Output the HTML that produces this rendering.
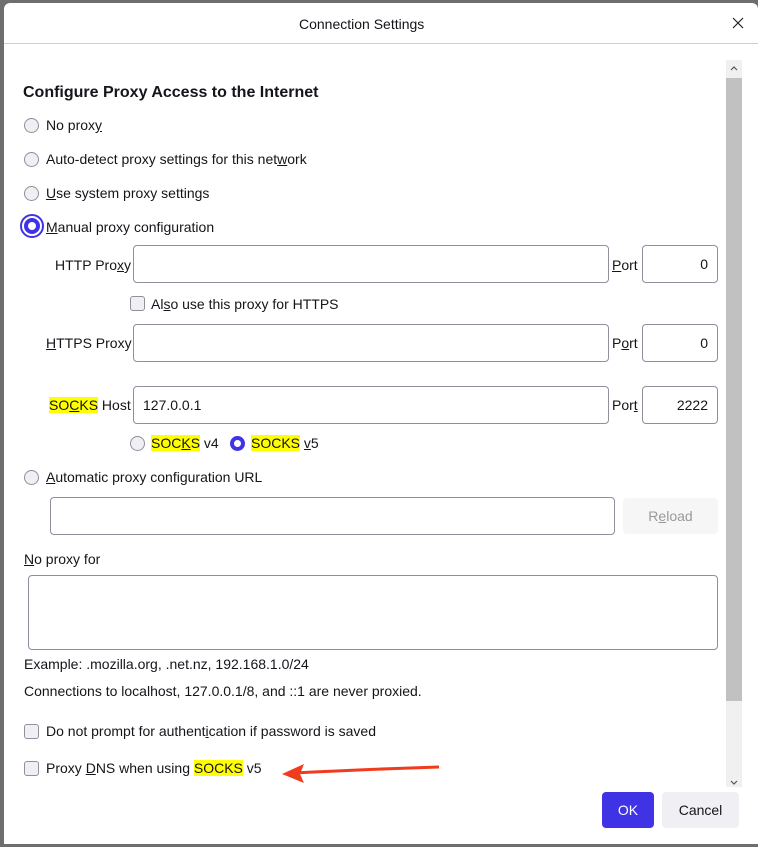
<!DOCTYPE html>
<html><head><meta charset="utf-8"><style>
*{box-sizing:border-box;margin:0;padding:0}
body{width:758px;height:847px;background:#6e6e6e;font-family:"Liberation Sans",sans-serif;font-size:14px;color:#15141a;position:relative;overflow:hidden}
.dlg{position:absolute;left:4px;top:3px;width:754px;height:841px;background:#fff;border-radius:6px 6px 0 0}
.a{position:absolute;white-space:nowrap}
.t{line-height:18px;margin-top:-3px}
.rad{position:absolute;width:15px;height:15px;border-radius:50%;border:1px solid #8f8f9d;background:#f0f0f4}
.rad.on{border:4px solid #4033e5;background:#fff;box-shadow:none}
.chk{position:absolute;width:15px;height:15px;border-radius:3px;border:1px solid #8f8f9d;background:#f0f0f4}
.in{position:absolute;height:38px;border:1px solid #8f8f9d;border-radius:4px;background:#fff;padding:0 9px;line-height:36px}
.hl{background:#ffff00}
u{text-decoration:underline}
</style></head><body>
<div class="dlg">
<div class="a" style="left:0;top:0;width:754px;height:41px;border-bottom:1px solid #d0d0d0"></div>
<div class="a t" style="left:295px;top:12px;font-size:14px;margin-top:0">Connection Settings</div>
<svg class="a" style="left:728px;top:14px" width="12" height="12"><path d="M1 1L11 11M11 1L1 11" stroke="#222" stroke-width="1.2"/></svg>
<div class="a" style="left:722px;top:57px;width:16px;height:727px;background:#f0f0f0"></div>
<div class="a" style="left:722px;top:75px;width:16px;height:623px;background:#c1c1c1"></div>
<svg class="a" style="left:726px;top:62px" width="8" height="6"><path d="M1 5L4 2L7 5" stroke="#555" fill="none" stroke-width="1.2"/></svg>
<svg class="a" style="left:726px;top:777px" width="8" height="6"><path d="M1 1L4 4L7 1" stroke="#555" fill="none" stroke-width="1.2"/></svg>

<div class="a t" style="left:19px;top:81px;font-size:16px;font-weight:bold;margin-top:0">Configure Proxy Access to the Internet</div>

<div class="rad" style="left:20px;top:115px"></div><div class="a t" style="left:42px;top:116px">No prox<u>y</u></div>
<div class="rad" style="left:20px;top:149px"></div><div class="a t" style="left:42px;top:150px">Auto-detect proxy settings for this net<u>w</u>ork</div>
<div class="rad" style="left:20px;top:183px"></div><div class="a t" style="left:42px;top:184px"><u>U</u>se system proxy settings</div>
<div class="a" style="left:16px;top:211px;width:24px;height:24px;border-radius:50%;border:2px solid #4033e5"></div>
<div class="rad on" style="left:20px;top:215px;width:16px;height:16px"></div><div class="a t" style="left:42px;top:218px"><u>M</u>anual proxy configuration</div>

<div class="a t" style="left:51px;top:256px">HTTP Pro<u>x</u>y</div>
<div class="in" style="left:129px;top:242px;width:476px"></div>
<div class="a t" style="left:608px;top:256px"><u>P</u>ort</div>
<div class="in" style="left:638px;top:242px;width:76px;text-align:right">0</div>

<div class="chk" style="left:126px;top:293px"></div><div class="a t" style="left:147px;top:295px">Al<u>s</u>o use this proxy for HTTPS</div>

<div class="a t" style="left:42px;top:334px"><u>H</u>TTPS Proxy</div>
<div class="in" style="left:129px;top:321px;width:476px"></div>
<div class="a t" style="left:608px;top:334px">P<u>o</u>rt</div>
<div class="in" style="left:638px;top:321px;width:76px;text-align:right">0</div>

<div class="a t" style="left:45px;top:396px"><span class="hl">SO<u>C</u>KS</span> Host</div>
<div class="in" style="left:129px;top:383px;width:476px">127.0.0.1</div>
<div class="a t" style="left:608px;top:396px">Por<u>t</u></div>
<div class="in" style="left:638px;top:383px;width:76px;text-align:right">2222</div>

<div class="rad" style="left:126px;top:433px"></div><div class="a t" style="left:147px;top:434px"><span class="hl">SOC<u>K</u>S</span> v4</div>
<div class="rad on" style="left:226px;top:433px"></div><div class="a t" style="left:247px;top:434px"><span class="hl">SOCKS</span> <u>v</u>5</div>

<div class="rad" style="left:20px;top:467px"></div><div class="a t" style="left:42px;top:468px"><u>A</u>utomatic proxy configuration URL</div>
<div class="in" style="left:46px;top:494px;width:565px"></div>
<div class="a" style="left:619px;top:495px;width:95px;height:36px;background:#f6f6f7;border-radius:4px;color:#999;text-align:center;line-height:36px">R<u>e</u>load</div>

<div class="a t" style="left:20px;top:550px"><u>N</u>o proxy for</div>
<div class="a" style="left:24px;top:572px;width:690px;height:75px;border:1px solid #8f8f9d;border-radius:4px"></div>

<div class="a t" style="left:20px;top:655px">Example: .mozilla.org, .net.nz, 192.168.1.0/24</div>
<div class="a t" style="left:20px;top:682px">Connections to localhost, 127.0.0.1/8, and ::1 are never proxied.</div>

<div class="chk" style="left:20px;top:721px"></div><div class="a t" style="left:42px;top:722px">Do not prompt for authent<u>i</u>cation if password is saved</div>
<div class="chk" style="left:20px;top:758px"></div><div class="a t" style="left:42px;top:759px">Proxy <u>D</u>NS when using <span class="hl">SOCKS</span> v5</div>
<svg class="a" style="left:270px;top:755px" width="170" height="30"><path d="M165 9 Q100 11 20 15" stroke="#f03c1c" stroke-width="3" fill="none"/><path d="M8 16 L30 6 L26 16 L30 25 Z" fill="#f03c1c"/></svg>

<div class="a" style="left:598px;top:789px;width:52px;height:36px;background:#4033e5;border-radius:4px;color:#fff;text-align:center;line-height:36px">OK</div>
<div class="a" style="left:658px;top:789px;width:77px;height:36px;background:#f0f0f4;border-radius:4px;text-align:center;line-height:36px">Cancel</div>
</div>
</body></html>
